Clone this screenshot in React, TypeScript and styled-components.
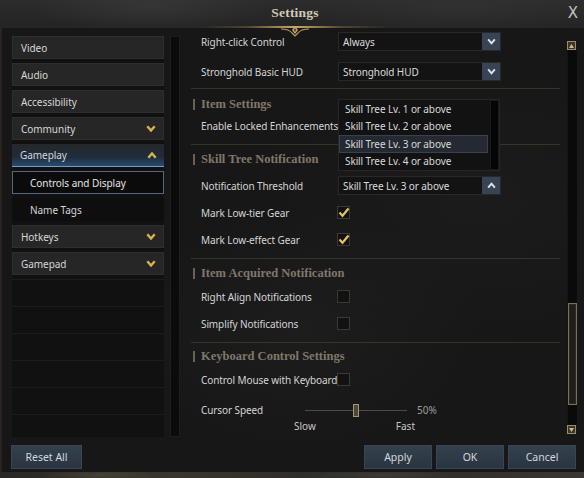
import React from "react";
import styled, { createGlobalStyle, css } from "styled-components";

const Global = createGlobalStyle`
  html, body { margin: 0; padding: 0; background: #141414; }
  body { width: 584px; height: 478px; overflow: hidden; font-family: "Noto Sans", "Open Sans", sans-serif; }
  * { box-sizing: border-box; }
`;

const Window = styled.div`
  width: 584px;
  height: 478px;
  display: flex;
  flex-direction: column;
  box-shadow: inset 2px 0 0 #2b2320;
  background:
    radial-gradient(ellipse 180px 120px at 300px 330px, rgba(40, 40, 40, 0.35), transparent),
    radial-gradient(ellipse 220px 140px at 480px 200px, rgba(34, 34, 34, 0.4), transparent),
    #171717;
`;

const TitleBar = styled.header`
  height: 28px;
  flex: none;
  display: grid;
  grid-template-columns: 1fr auto 1fr;
  align-items: center;
  padding: 0 6px 2px 12px;
  background:
    linear-gradient(90deg, transparent 0%, rgba(120, 100, 60, 0.5) 25%, #c8a868 50%, rgba(120, 100, 60, 0.5) 75%, transparent 100%) 200px 100% / 190px 2px no-repeat,
    linear-gradient(90deg, #2a2722, #2a2722) 0 100% / 100% 1px no-repeat,
    radial-gradient(ellipse 120px 30px at 150px 5px, rgba(70, 70, 70, 0.4), transparent),
    radial-gradient(ellipse 160px 30px at 460px 8px, rgba(60, 60, 60, 0.35), transparent),
    linear-gradient(180deg, #2c2c2c 0%, #232323 100%);
`;

const Title = styled.h1`
  grid-column: 2;
  margin: 0;
  font-family: "Liberation Serif", "DejaVu Serif", serif;
  font-weight: bold;
  font-size: 13.5px;
  letter-spacing: 0.2px;
  color: #d2cab9;
  position: relative;
`;

const Ornament = styled.svg`
  position: absolute;
  left: 50%;
  top: 18px;
  margin-left: -14px;
`;

const Close = styled.div`
  grid-column: 3;
  justify-self: end;
  font-family: "DejaVu Sans", sans-serif;
  font-size: 15px;
  color: #c2c2c2;
`;

const Body = styled.div`
  display: flex;
  height: 410px;
  flex: none;
  padding: 4px 0 0 12px;
`;

const Sidebar = styled.nav`
  width: 152px;
  margin-top: 4px;
  height: 401px;
  overflow: hidden;
  display: flex;
  flex-direction: column;
  gap: 4px;
  background: #111;
`;

type Variant = "normal" | "open" | "selected" | "sub" | "empty";

const NavItem = styled.div<{ $v: Variant }>`
  height: 23px;
  flex: none;
  display: flex;
  align-items: center;
  justify-content: space-between;
  padding: 0 7px 0 8px;
  font-size: 10px;
  letter-spacing: -0.05px;
  color: #d6d6d6;
  background: #262626;
  border: 1px solid #2e2e2e;
  ${(p) =>
    p.$v === "open" &&
    css`
      background: linear-gradient(180deg, #262729 0%, #1f2d3d 60%, #2a4a6e 100%);
      border: none;
      border-bottom: 1px solid #6c9cd0;
    `}
  ${(p) =>
    p.$v === "selected" &&
    css`
      background: #0b0b0c;
      border: 1px solid #56667c;
      padding-left: 17px;
      color: #e4e4e4;
    `}
  ${(p) =>
    p.$v === "sub" &&
    css`
      background: #0e0e0e;
      border: 1px solid #0e0e0e;
      padding-left: 17px;
    `}
  ${(p) =>
    p.$v === "empty" &&
    css`
      background: transparent;
      border: none;
      border-top: 1px solid #1d1d1d;
    `}
`;

const LeftTrack = styled.div`
  width: 10px;
  margin: 4px 0 1px 6px;
  background: #0b0b0b;
  border: 1px solid #1d1d1d;
`;

const Content = styled.main`
  width: 369px;
  margin-left: 11px;
  display: flex;
  flex-direction: column;
`;

const Section = styled.section<{ $pt: number; $pb: number; $line?: boolean }>`
  padding-top: ${(p) => p.$pt}px;
  padding-bottom: ${(p) => p.$pb}px;
  border-bottom: ${(p) => (p.$line ? "1px solid #37322a" : "none")};
  display: flex;
  flex-direction: column;
`;

const Heading = styled.h2`
  margin: 0;
  height: 14px;
  display: flex;
  align-items: center;
  gap: 6px;
  padding-left: 2px;
  font-family: "Liberation Serif", "DejaVu Serif", serif;
  font-weight: bold;
  font-size: 12.5px;
  color: #80776a;
  &::before {
    content: "";
    width: 2px;
    height: 11px;
    background: #6a6152;
  }
`;

const Row = styled.div<{ $h: number; $mt?: number }>`
  height: ${(p) => p.$h}px;
  margin-top: ${(p) => p.$mt ?? 0}px;
  display: grid;
  grid-template-columns: 137px 1fr;
  align-items: center;
  padding-left: 10px;
`;

const Label = styled.span`
  font-size: 10px;
  letter-spacing: -0.1px;
  color: #d4d4d4;
  white-space: nowrap;
`;

const DropWrap = styled.div`
  position: relative;
  width: 163px;
`;

const DropBox = styled.div`
  height: 19px;
  display: flex;
  align-items: center;
  justify-content: space-between;
  background: #131313;
  border: 1px solid #282828;
  padding-left: 4px;
  font-size: 10px;
  letter-spacing: -0.1px;
  color: #dadada;
`;

const DropBtn = styled.div`
  width: 18px;
  height: 17px;
  display: grid;
  place-items: center;
  background: #384454;
`;

const List = styled.div`
  position: absolute;
  left: 0;
  bottom: calc(100% + 5px);
  width: 162px;
  height: 72px;
  display: flex;
  background: #121212;
  border: 1px solid #262626;
`;

const ListItems = styled.div`
  width: 149px;
  display: flex;
  flex-direction: column;
`;

const ListItem = styled.div<{ $active?: boolean }>`
  height: 18px;
  display: flex;
  align-items: center;
  padding-left: 5px;
  font-size: 10px;
  letter-spacing: -0.1px;
  color: #d8d8d8;
  white-space: nowrap;
  border: 1px solid ${(p) => (p.$active ? "#394050" : "transparent")};
  background: ${(p) => (p.$active ? "#252a32" : "transparent")};
`;

const ListTrack = styled.div`
  width: 9px;
  margin-left: 2px;
  background: #050505;
  border: 1px solid #1a1a1a;
`;

const Box = styled.div`
  width: 13px;
  height: 13px;
  margin-left: -1px;
  display: grid;
  place-items: center;
  background: #121212;
  border: 1px solid #3a3933;
`;

const SliderRow = styled.div`
  margin-top: 7px;
  height: 20px;
  display: grid;
  grid-template-columns: 104px 102px auto;
  align-items: center;
  padding-left: 10px;
`;

const Track = styled.div`
  position: relative;
  height: 1px;
  background: #4a4a4a;
`;

const Thumb = styled.div`
  position: absolute;
  top: -6px;
  width: 6px;
  height: 13px;
  background: #4e4638;
  border: 1px solid #a4966e;
`;

const Value = styled.span`
  margin-left: 10px;
  font-size: 10px;
  color: #9c9c9c;
`;

const Ends = styled.div`
  height: 12px;
  width: 121px;
  margin-left: 103px;
  display: flex;
  justify-content: space-between;
  align-items: center;
  font-size: 10px;
  color: #c6c6c6;
`;

const RightScroll = styled.div`
  width: 10px;
  margin: 9px 0 4px 7px;
  display: flex;
  flex-direction: column;
`;

const ScrollBtn = styled.div`
  width: 9px;
  height: 9px;
  flex: none;
  display: grid;
  place-items: center;
  background: #3c3629;
  border: 1px solid #9c8e6a;
`;

const ScrollTrack = styled.div`
  flex: 1;
  background: #0a0a0a;
  border-left: 1px solid #141414;
`;

const ScrollThumb = styled.div`
  height: 102px;
  background: #1f1d19;
  border: 1px solid #7c7054;
  box-shadow: inset 0 0 0 1px #2c2a24;
`;

const Footer = styled.footer`
  height: 34px;
  flex: none;
  display: flex;
  justify-content: space-between;
  align-items: flex-start;
  padding: 7px 8px 0 11px;
`;

const Group = styled.div`
  display: flex;
  gap: 4px;
`;

const Button = styled.button<{ $w: number }>`
  width: ${(p) => p.$w}px;
  height: 24px;
  padding: 0;
  font-family: "Noto Sans", "Open Sans", sans-serif;
  font-size: 10.5px;
  color: #d2d7dd;
  background: linear-gradient(180deg, #34404d 0%, #2b3541 100%);
  border: 1px solid #3a4655;
`;

const Strip = styled.div`
  flex: 1;
  background:
    radial-gradient(ellipse 60px 6px at 100px 3px, rgba(90, 80, 60, 0.5), transparent),
    radial-gradient(ellipse 80px 6px at 380px 3px, rgba(80, 76, 66, 0.5), transparent),
    linear-gradient(90deg, #2a2824, #3a362e 30%, #2c2a26 60%, #3a3630);
`;

const Chevron = ({ up, color, w = 10, h = 7, sw = 2.4 }: { up?: boolean; color: string; w?: number; h?: number; sw?: number }) => (
  <svg width={w} height={h} viewBox="0 0 10 7">
    <polyline
      points={up ? "1.3,5.8 5,1.5 8.7,5.8" : "1.3,1.2 5,5.5 8.7,1.2"}
      fill="none"
      stroke={color}
      strokeWidth={sw}
      strokeLinecap="butt"
      strokeLinejoin="miter"
    />
  </svg>
);

const Check = () => (
  <svg width="12" height="11" viewBox="0 0 12 11">
    <polyline points="1.5,5.5 4.5,8.8 10.5,1.5" fill="none" stroke="#e3c35c" strokeWidth="2.2" />
  </svg>
);

const Dropdown = ({ value, up, children }: { value: string; up?: boolean; children?: React.ReactNode }) => (
  <DropWrap>
    <DropBox>
      <span>{value}</span>
      <DropBtn>
        <Chevron up={up} color="#dfe4ea" w={9} h={7} sw={2.2} />
      </DropBtn>
    </DropBox>
    {children}
  </DropWrap>
);

const nav: { label: string; v: Variant; chev?: "down" | "up" }[] = [
  { label: "Video", v: "normal" },
  { label: "Audio", v: "normal" },
  { label: "Accessibility", v: "normal" },
  { label: "Community", v: "normal", chev: "down" },
  { label: "Gameplay", v: "open", chev: "up" },
  { label: "Controls and Display", v: "selected" },
  { label: "Name Tags", v: "sub" },
  { label: "Hotkeys", v: "normal", chev: "down" },
  { label: "Gamepad", v: "normal", chev: "down" },
];

const levels = [1, 2, 3, 4];

export default function App() {
  return (
    <>
      <Global />
      <Window>
        <TitleBar>
          <Title>
            Settings
            <Ornament width="28" height="14" viewBox="0 0 28 14">
              <path d="M0 6 Q8 6 11 10 L14 13 L17 10 Q20 6 28 6" fill="none" stroke="#b89a5c" strokeWidth="1.2" />
              <path d="M14 3 L17 7 L14 11 L11 7 Z" fill="#c9ab6a" />
              <path d="M14 5 L15.5 7 L14 9 L12.5 7 Z" fill="#5a4a2c" />
            </Ornament>
          </Title>
          <Close>X</Close>
        </TitleBar>
        <Body>
          <Sidebar>
            {nav.map((n) => (
              <NavItem key={n.label} $v={n.v}>
                <span>{n.label}</span>
                {n.chev && <Chevron up={n.chev === "up"} color="#d8b24c" />}
              </NavItem>
            ))}
            {Array.from({ length: 6 }).map((_, i) => (
              <NavItem key={"e" + i} $v="empty" />
            ))}
          </Sidebar>
          <LeftTrack />
          <Content>
            <Section $pt={0} $pb={7} $line>
              <Row $h={19}>
                <Label>Right-click Control</Label>
                <Dropdown value="Always" />
              </Row>
              <Row $h={19} $mt={11}>
                <Label>Stronghold Basic HUD</Label>
                <Dropdown value="Stronghold HUD" />
              </Row>
            </Section>
            <Section $pt={8} $pb={8} $line>
              <Heading>Item Settings</Heading>
              <Row $h={20} $mt={5}>
                <Label>Enable Locked Enhancements</Label>
              </Row>
            </Section>
            <Section $pt={7} $pb={5} $line>
              <Heading>Skill Tree Notification</Heading>
              <Row $h={19} $mt={10}>
                <Label>Notification Threshold</Label>
                <Dropdown value="Skill Tree Lv. 3 or above" up>
                  <List>
                    <ListItems>
                      {levels.map((l) => (
                        <ListItem key={l} $active={l === 3}>
                          Skill Tree Lv. {l} or above
                        </ListItem>
                      ))}
                    </ListItems>
                    <ListTrack />
                  </List>
                </Dropdown>
              </Row>
              <Row $h={27} $mt={4}>
                <Label>Mark Low-tier Gear</Label>
                <Box>
                  <Check />
                </Box>
              </Row>
              <Row $h={27}>
                <Label>Mark Low-effect Gear</Label>
                <Box>
                  <Check />
                </Box>
              </Row>
            </Section>
            <Section $pt={7} $pb={5} $line>
              <Heading>Item Acquired Notification</Heading>
              <Row $h={27} $mt={3}>
                <Label>Right Align Notifications</Label>
                <Box />
              </Row>
              <Row $h={27}>
                <Label>Simplify Notifications</Label>
                <Box />
              </Row>
            </Section>
            <Section $pt={6} $pb={0}>
              <Heading>Keyboard Control Settings</Heading>
              <Row $h={27} $mt={3}>
                <Label>Control Mouse with Keyboard</Label>
                <Box />
              </Row>
              <SliderRow>
                <Label>Cursor Speed</Label>
                <Track>
                  <Thumb style={{ left: "48px" }} />
                </Track>
                <Value>50%</Value>
              </SliderRow>
              <Ends>
                <span>Slow</span>
                <span>Fast</span>
              </Ends>
            </Section>
          </Content>
          <RightScroll>
            <ScrollBtn>
              <svg width="5" height="4" viewBox="0 0 5 4">
                <path d="M0 4 L2.5 0 L5 4 Z" fill="#cbb98e" />
              </svg>
            </ScrollBtn>
            <ScrollTrack>
              <ScrollThumb style={{ marginTop: "253px" }} />
            </ScrollTrack>
            <ScrollBtn>
              <svg width="5" height="4" viewBox="0 0 5 4">
                <path d="M0 0 L2.5 4 L5 0 Z" fill="#cbb98e" />
              </svg>
            </ScrollBtn>
          </RightScroll>
        </Body>
        <Footer>
          <Button $w={71}>Reset All</Button>
          <Group>
            <Button $w={68}>Apply</Button>
            <Button $w={68}>OK</Button>
            <Button $w={68}>Cancel</Button>
          </Group>
        </Footer>
        <Strip />
      </Window>
    </>
  );
}
